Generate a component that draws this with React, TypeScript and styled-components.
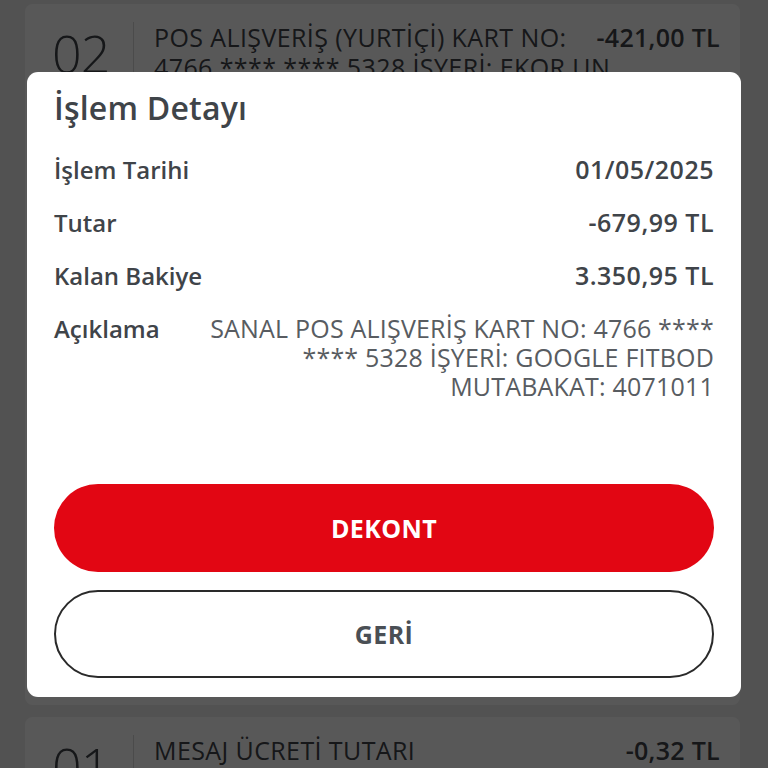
import styled, { createGlobalStyle } from "styled-components";

const GlobalStyle = createGlobalStyle`
  html, body {
    margin: 0;
    padding: 0;
    background: #ebebeb;
    font-family: "Open Sans", "Noto Sans", sans-serif;
  }
`;

const Page = styled.div`
  display: flex;
  flex-direction: column;
  gap: 12px;
  padding: 4px 28px 0 25px;
  height: 768px;
  overflow: hidden;
  box-sizing: border-box;
`;

const TxCard = styled.div<{ $minHeight?: number }>`
  display: flex;
  align-items: flex-start;
  flex-shrink: 0;
  background: #fdfdfd;
  border-radius: 8px;
  padding: 18px 20px 0 27px;
  min-height: ${(p) => (p.$minHeight ? `${p.$minHeight}px` : "auto")};
  box-sizing: border-box;
  color: #3f4449;
`;

const TxNumber = styled.div`
  width: 82px;
  flex-shrink: 0;
  box-sizing: border-box;
  font-size: 52px;
  font-weight: 300;
  line-height: 62px;
  border-right: 1px solid #d6d6d6;
  letter-spacing: -1px;
`;

const TxText = styled.div`
  flex: 1;
  min-width: 0;
  margin-left: 20px;
  font-size: 25px;
  line-height: 30px;
  letter-spacing: 0.4px;
  white-space: pre;
`;

const TxAmount = styled.div`
  margin-left: 16px;
  font-size: 25px;
  font-weight: 600;
  line-height: 30px;
  letter-spacing: 0.3px;
  white-space: nowrap;
`;

const Overlay = styled.div`
  position: fixed;
  inset: 0;
  background: rgba(0, 0, 0, 0.65);
  display: flex;
  align-items: center;
  justify-content: center;
`;

const Modal = styled.div`
  width: 714px;
  height: 625px;
  box-sizing: border-box;
  background: #ffffff;
  border-radius: 11px;
  padding: 18px 27px 19px;
  display: flex;
  flex-direction: column;
  color: #3f4449;
`;

const Title = styled.h2`
  margin: 0;
  font-size: 32px;
  line-height: 36px;
  font-weight: 600;
  letter-spacing: 0.2px;
`;

const DetailList = styled.div`
  margin-top: 17px;
  display: flex;
  flex-direction: column;
`;

const DetailRow = styled.div`
  display: flex;
  justify-content: space-between;
  align-items: flex-start;
  padding: 12px 0;
  font-size: 24px;
  line-height: 29px;
`;

const Label = styled.span`
  font-weight: 600;
  white-space: nowrap;
`;

const Value = styled.span<{ $light?: boolean }>`
  font-size: 25px;
  font-weight: ${(p) => (p.$light ? 400 : 600)};
  color: ${(p) => (p.$light ? "#585c61" : "inherit")};
  letter-spacing: ${(p) => (p.$light ? "0.2px" : "0.5px")};
  text-align: right;
  white-space: pre-line;
`;

const Actions = styled.div`
  margin-top: auto;
  display: flex;
  flex-direction: column;
  gap: 18px;
`;

const ActionButton = styled.button<{ $primary?: boolean }>`
  height: 88px;
  border-radius: 44px;
  font-family: inherit;
  font-size: 25px;
  font-weight: 700;
  letter-spacing: 0.4px;
  cursor: pointer;
  background: ${(p) => (p.$primary ? "#e20613" : "#ffffff")};
  color: ${(p) => (p.$primary ? "#ffffff" : "#4a4f55")};
  border: ${(p) => (p.$primary ? "none" : "2px solid #2a2a2a")};
`;

export default function App() {
  return (
    <>
      <GlobalStyle />
      <Page>
        <TxCard $minHeight={701}>
          <TxNumber>02</TxNumber>
          <TxText>
            {"POS ALIŞVERİŞ (YURTİÇİ) KART NO:\n4766 **** **** 5328 İŞYERİ: EKOR UN"}
          </TxText>
          <TxAmount>-421,00 TL</TxAmount>
        </TxCard>
        <TxCard>
          <TxNumber>01</TxNumber>
          <TxText>MESAJ ÜCRETİ TUTARI</TxText>
          <TxAmount>-0,32 TL</TxAmount>
        </TxCard>
      </Page>
      <Overlay>
        <Modal>
          <Title>İşlem Detayı</Title>
          <DetailList>
            <DetailRow>
              <Label>İşlem Tarihi</Label>
              <Value>01/05/2025</Value>
            </DetailRow>
            <DetailRow>
              <Label>Tutar</Label>
              <Value>-679,99 TL</Value>
            </DetailRow>
            <DetailRow>
              <Label>Kalan Bakiye</Label>
              <Value>3.350,95 TL</Value>
            </DetailRow>
            <DetailRow>
              <Label>Açıklama</Label>
              <Value $light>
                {"SANAL POS ALIŞVERİŞ KART NO: 4766 ****\n**** 5328 İŞYERİ: GOOGLE FITBOD\nMUTABAKAT: 4071011"}
              </Value>
            </DetailRow>
          </DetailList>
          <Actions>
            <ActionButton $primary>DEKONT</ActionButton>
            <ActionButton>GERİ</ActionButton>
          </Actions>
        </Modal>
      </Overlay>
    </>
  );
}
